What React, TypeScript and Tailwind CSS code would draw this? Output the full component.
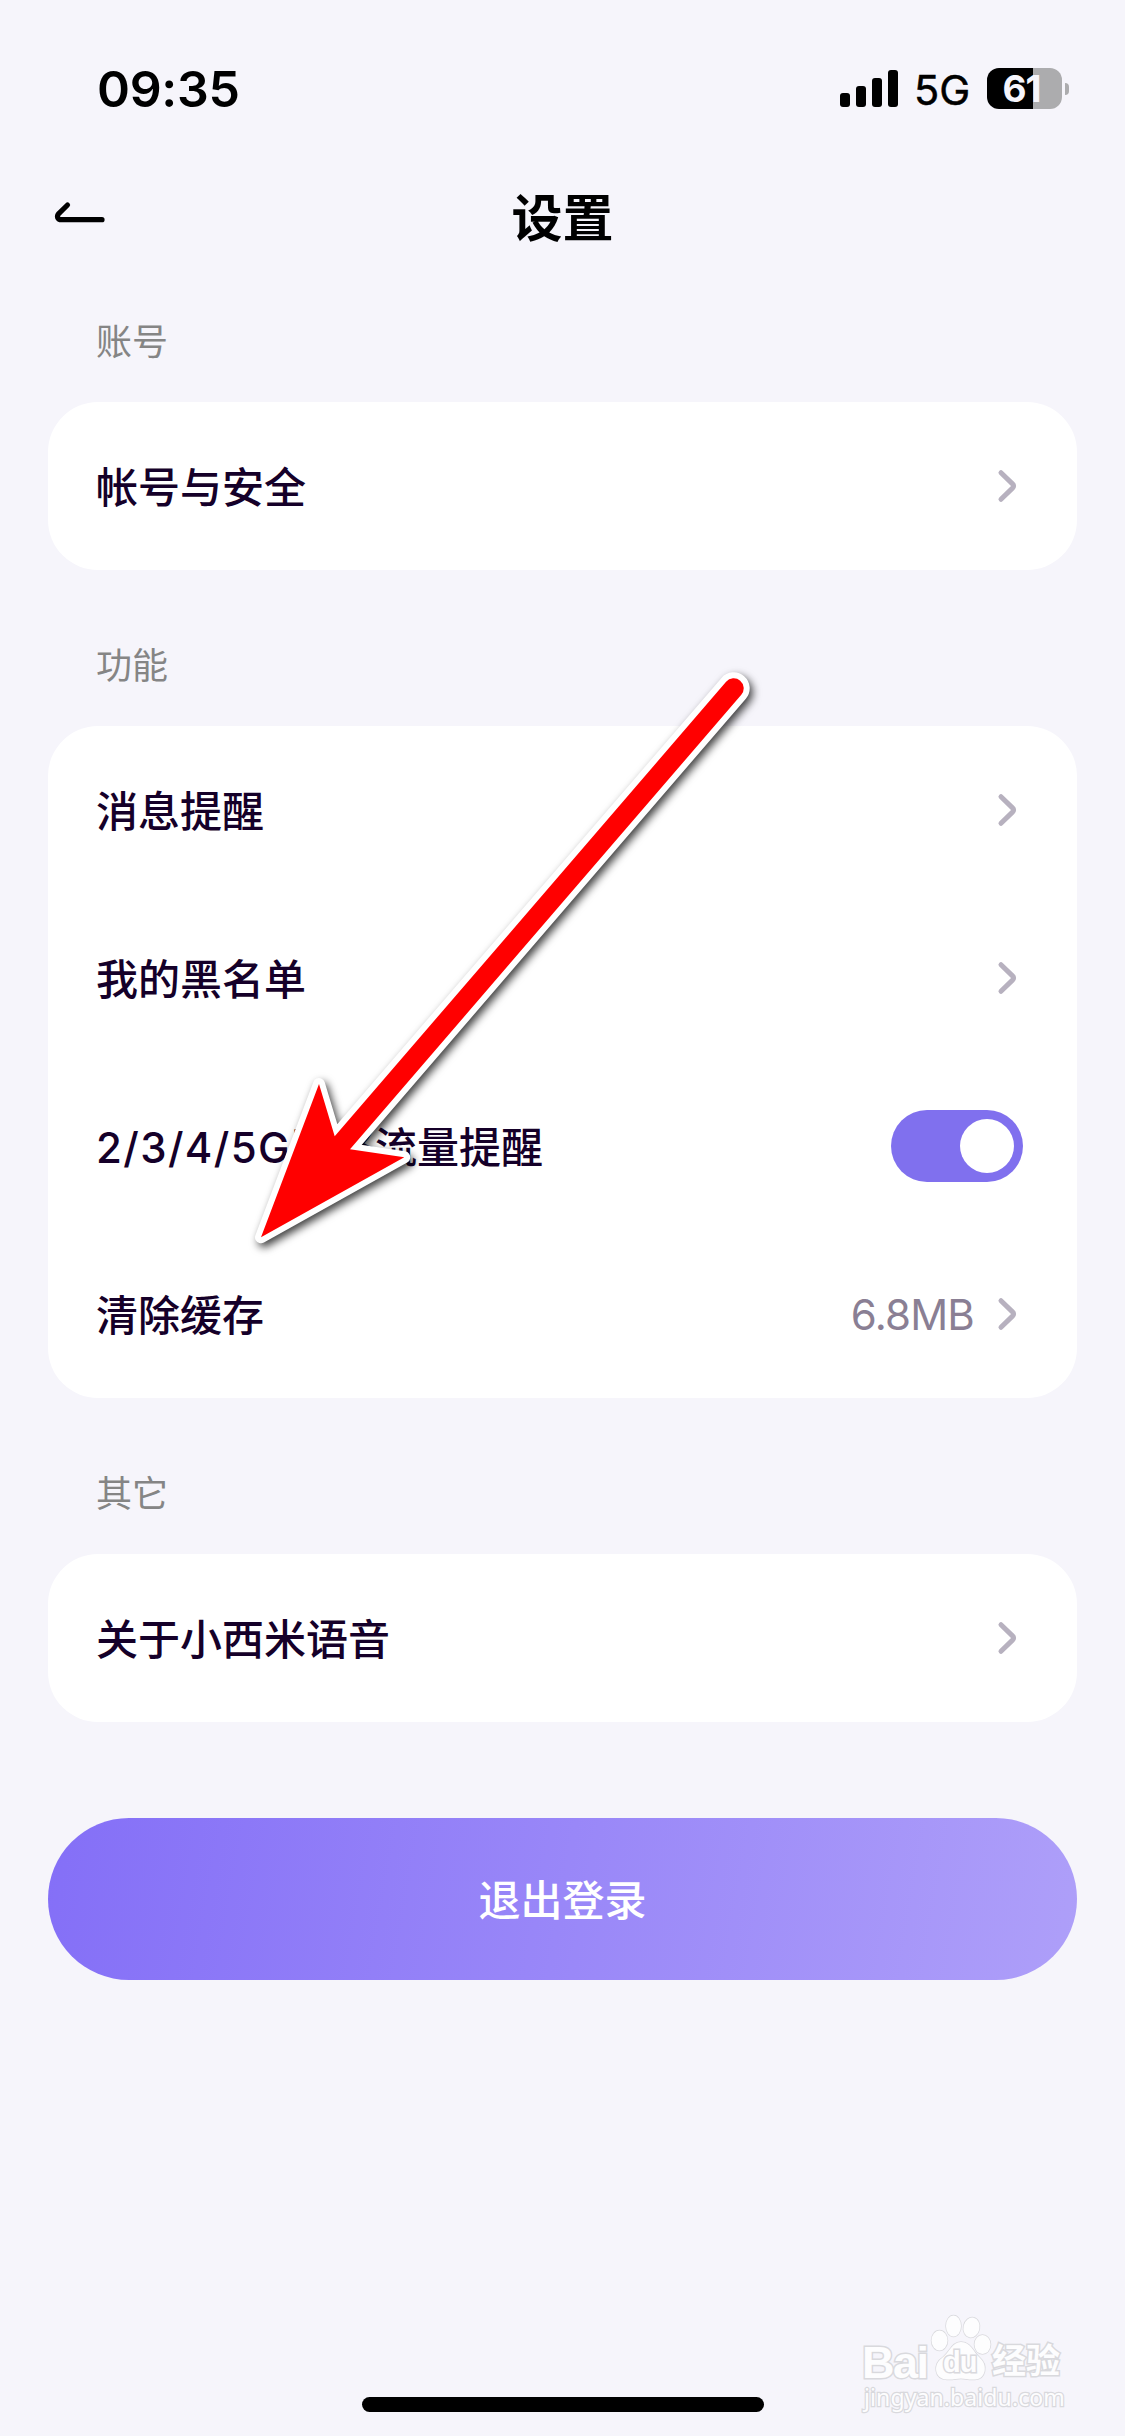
import type { ReactNode } from "react";

function Chevron() {
  return (
    <svg width="24" height="36" viewBox="0 0 24 36" fill="none" className="mr-[3px] shrink-0">
      <path
        d="M5 4.700 16.500 15.900Q18.700 18 16.500 20.100L5 31.300"
        stroke="#b7b1bf"
        strokeWidth="5"
        strokeLinecap="round"
        strokeLinejoin="round"
      />
    </svg>
  );
}

function Row({ label, children }: { label: ReactNode; children: ReactNode }) {
  return (
    <div className="flex h-[168px] items-center justify-between pl-12 pr-[54px]">
      <span className="pt-[3px] text-[42px] leading-[60px] font-medium text-[#150029]">{label}</span>
      {children}
    </div>
  );
}

function Section({ title, children }: { title: string; children: ReactNode }) {
  return (
    <section className="mb-9">
      <h2 className="flex h-[120px] items-center pl-12 text-[36px] leading-none font-normal text-[#858585]">
        {title}
      </h2>
      <div className="rounded-[50px] bg-white">{children}</div>
    </section>
  );
}

function StatusBar() {
  return (
    <div className="flex h-[165px] items-start justify-between pl-[97px] pr-[56px]">
      <span className="mt-[59px] text-[50px] leading-[60px] font-semibold tracking-[-0.3px]">09:35</span>
      <div className="mt-[68px] flex h-[41px] items-center">
        <div className="flex h-[41px] items-end gap-1.5 pb-0.5">
          <div className="h-3.5 w-2.5 rounded-[3px] bg-black" />
          <div className="h-[21px] w-2.5 rounded-[3px] bg-black" />
          <div className="h-[29px] w-2.5 rounded-[3px] bg-black" />
          <div className="h-[37px] w-2.5 rounded-[3px] bg-black" />
        </div>
        <span className="ml-4 w-[73px] pt-[3px] text-[41.500px] leading-[41px] font-normal whitespace-nowrap [-webkit-text-stroke:0.5px_#000]">
          5G
        </span>
        <div className="flex h-[41px] w-[75px] items-center justify-center rounded-[12px] bg-[linear-gradient(90deg,#000_46px,#acacae_46px)] pr-[6px] text-[37px] leading-[41px] font-bold tracking-[-1px] text-[#f6f5fb]">
          61
        </div>
        <div className="ml-[3px] h-3 w-1 rounded-r-full bg-[#acacae]" />
      </div>
    </div>
  );
}

function Header() {
  return (
    <header className="flex h-[117px] items-start px-[50px]">
      <svg width="60" height="30" viewBox="0 0 60 30" fill="none" className="mt-[34px]">
        <path
          d="M17.500 6 9 14.300C6.200 17.500 7.500 20.700 11.500 20.700H52"
          stroke="#000"
          strokeWidth="5.200"
          strokeLinecap="round"
          strokeLinejoin="round"
        />
      </svg>
      <h1 className="mt-[24px] flex-1 pr-[60px] text-center text-[51px] leading-[60px] font-bold">设置</h1>
    </header>
  );
}

function PointerArrow() {
  return (
    <svg
      width="560"
      height="620"
      viewBox="230 650 560 620"
      className="absolute top-[650px] left-[230px] drop-shadow-[3px_4px_4px_rgba(0,0,0,0.75)]"
    >
      <path
        d="M261 1237.300 319 1084 334.700 1136.300 726.100 681.800A10 10 0 0 1 741.300 694.800L350 1149.300 404.300 1157.300Z"
        fill="#f00"
        stroke="#fff"
        strokeWidth="12"
        strokeLinejoin="round"
        paintOrder="stroke"
      />
    </svg>
  );
}

function Watermark() {
  return (
    <div className="absolute top-[2310px] left-[860px] h-[105px] w-[210px] text-[#fdfdfe] [paint-order:stroke] [-webkit-text-stroke:3px_#d9d9dd]">
      <span className="absolute top-[30px] left-[2px] font-['Liberation_Sans'] text-[45px] leading-[45px] font-bold tracking-[-1.5px]">
        Bai
      </span>
      <svg
        width="64"
        height="70"
        viewBox="0 0 64 70"
        className="absolute top-[4px] left-[70px]"
        fill="#fdfdfe"
        stroke="#d9d9dd"
        strokeWidth="1.500"
      >
        <ellipse cx="9.500" cy="26.500" rx="8" ry="10" />
        <ellipse cx="23.500" cy="12" rx="7.500" ry="10.500" />
        <ellipse cx="41.500" cy="13.500" rx="8" ry="10" transform="rotate(12 41.500 13.500)" />
        <ellipse cx="52.500" cy="30.500" rx="8" ry="9.500" />
        <path d="M31 28C41 28 43 38 50 44C58 51 56 65 45 65.500C39 66 35 64.500 31 64.500S22 66 17 65.500C4 65 3 50 12 44C20 38 22 28 31 28Z" />
      </svg>
      <span className="absolute top-[34px] left-[83px] font-['Liberation_Sans'] text-[29px] leading-[36px] font-bold tracking-[-1px]">
        du
      </span>
      <span className="absolute top-[31px] left-[132px] text-[34px] leading-[40px] font-bold whitespace-nowrap">经验</span>
      <span className="absolute top-[75px] left-[4px] font-['Noto_Sans'] text-[23px] leading-[24px] tracking-[0.1px] whitespace-nowrap [-webkit-text-stroke-width:2.500px]">
        jingyan.baidu.com
      </span>
    </div>
  );
}

export default function App() {
  return (
    <div className="relative flex h-[2436px] w-[1125px] flex-col overflow-hidden bg-[#f6f5fb] font-[Inter,'Noto_Sans_CJK_SC',sans-serif] text-black">
      <StatusBar />
      <Header />
      <main className="flex-1 px-12">
        <Section title="账号">
          <Row label="帐号与安全">
            <Chevron />
          </Row>
        </Section>
        <Section title="功能">
          <Row label="消息提醒">
            <Chevron />
          </Row>
          <Row label="我的黑名单">
            <Chevron />
          </Row>
          <Row
            label={
              <>
                <span className="tracking-[1.4px]">2/3/4/5G</span>网络流量提醒
              </>
            }
          >
            <button
              className="flex h-[72px] w-[132px] items-center justify-end rounded-full bg-[#8070ee] pr-[9px]"
              aria-label="流量提醒"
            >
              <span className="size-[54px] rounded-full bg-white" />
            </button>
          </Row>
          <Row label="清除缓存">
            <div className="flex items-center">
              <span className="mr-[22px] pt-0.5 text-[42px] leading-[60px] tracking-[-0.8px] text-[#8a7f94]">6.8MB</span>
              <Chevron />
            </div>
          </Row>
        </Section>
        <Section title="其它">
          <Row label="关于小西米语音">
            <Chevron />
          </Row>
        </Section>
        <button className="mt-24 flex h-[162px] w-full items-center justify-center rounded-full bg-[linear-gradient(100deg,#846ff7,#ae9ff9)] pt-[3px] text-[42px] leading-[60px] font-medium text-white">
          退出登录
        </button>
      </main>
      <div className="mb-6 h-[15px] w-[402px] self-center rounded-full bg-black" />
      <Watermark />
      <PointerArrow />
    </div>
  );
}
